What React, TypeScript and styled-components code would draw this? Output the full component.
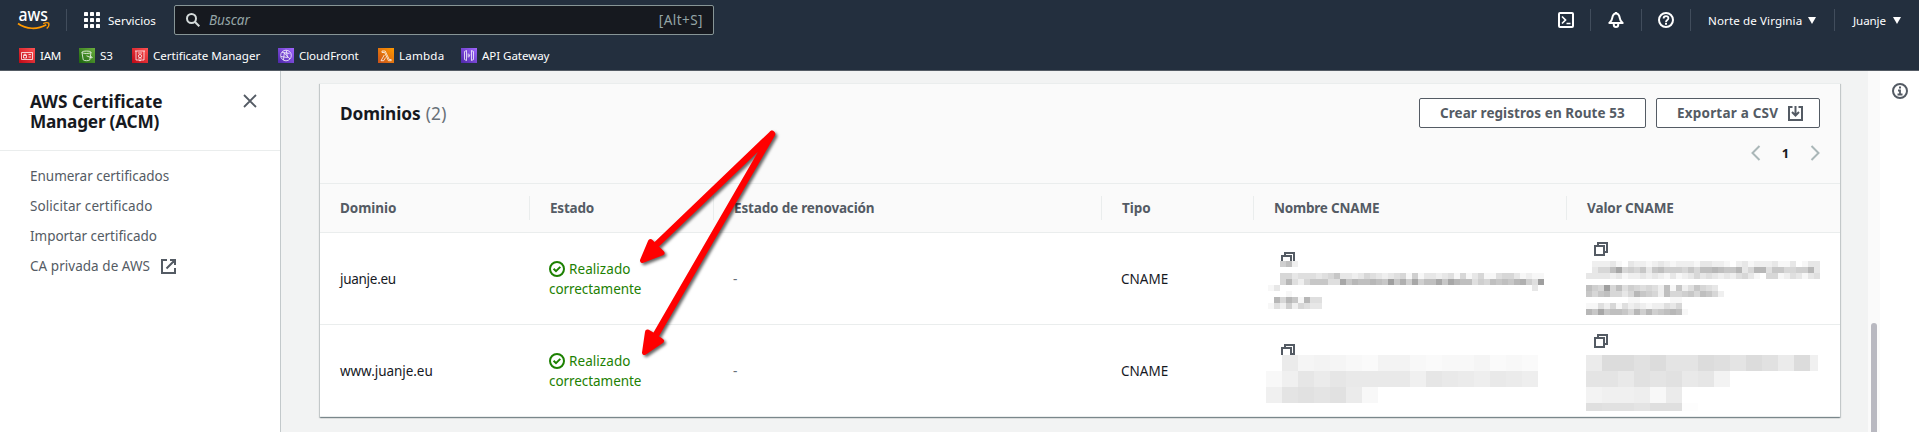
import React from "react";
import styled, { createGlobalStyle } from "styled-components";

const Global = createGlobalStyle`
  * { box-sizing: border-box; }
  body { margin: 0; background: #fff; overflow: hidden; }
  svg { display: block; flex: none; }
`;

const Page = styled.div`
  position: relative;
  display: flex;
  flex-direction: column;
  width: 1919px;
  height: 432px;
  overflow: hidden;
  font-family: "Noto Sans", "Open Sans", sans-serif;
  font-size: 13.5px;
  line-height: 20px;
  color: #16191f;
`;

const Text = styled.span<{ $ls?: number }>`
  white-space: nowrap;
  letter-spacing: ${(p) => p.$ls ?? 0}px;
`;

/* ---------- top navigation ---------- */

const TopNav = styled.header`
  flex: none;
  height: 71px;
  background: #232f3e;
  border-bottom: 1px solid #545b64;
  color: #fff;
  font-size: 11.6px;
  line-height: 17px;
`;

const NavRow = styled.div`
  display: flex;
  align-items: center;
  height: 40px;
`;

const Logo = styled.div`
  display: flex;
  align-items: center;
  width: 67px;
  height: 22px;
  padding-left: 17px;
  border-right: 1px solid #414d5c;
`;

const Services = styled.div`
  display: flex;
  align-items: center;
  gap: 8px;
  width: 107px;
  padding-left: 17px;

  span { padding-top: 1px; }
`;

const Search = styled.div`
  display: flex;
  align-items: center;
  width: 540px;
  height: 30px;
  padding: 0 10px 0 11px;
  background: #16191f;
  border: 1px solid #879596;
  border-radius: 2px;
  color: #95a5a6;
  font-size: 13.5px;
  line-height: 20px;
`;

const Placeholder = styled(Text)`
  flex: 1;
  padding-left: 9px;
  font-style: italic;
`;

const NavTools = styled.div`
  display: flex;
  align-items: center;
  margin-left: auto;
`;

const Tool = styled.div<{ $w: number; $pad: number; $last?: boolean }>`
  display: flex;
  align-items: center;
  width: ${(p) => p.$w}px;
  height: 22px;
  padding-left: ${(p) => p.$pad}px;
  border-right: ${(p) => (p.$last ? "0" : "1px solid #414d5c")};

  span { padding-top: 1px; }
`;

const Caret = styled.i<{ $gap: number }>`
  width: 0;
  height: 0;
  margin-left: ${(p) => p.$gap}px;
  border: 4px solid transparent;
  border-top: 7px solid #fff;
  border-bottom: 0;
`;

const Favorites = styled.nav`
  display: flex;
  align-items: center;
  height: 29px;
  margin-top: 1px;
  padding-left: 19px;
`;

const Favorite = styled.div<{ $w: number }>`
  display: flex;
  align-items: center;
  gap: 5px;
  width: ${(p) => p.$w}px;
`;

/* ---------- page frame ---------- */

const Body = styled.div`
  display: flex;
  flex: 1;
  min-height: 0;
`;

const Sidebar = styled.aside`
  width: 281px;
  border-right: 1px solid #c3c9cb;
  background: #fff;
`;

const SideHead = styled.div`
  display: flex;
  justify-content: space-between;
  height: 80px;
  padding: 21px 23px 0 30px;
  border-bottom: 1px solid #eaeded;

  svg { margin-top: 2px; }
`;

const SideTitle = styled.h2`
  display: flex;
  flex-direction: column;
  margin: 0;
  font-size: 17.25px;
  line-height: 20px;
  font-weight: 700;
`;

const SideLinks = styled.ul`
  display: flex;
  flex-direction: column;
  gap: 10px;
  margin: 0;
  padding: 15px 0 0 30px;
  list-style: none;
  color: #545b64;
`;

const SideLink = styled.li`
  display: flex;
  align-items: center;
  gap: 11px;
`;

const Content = styled.main`
  flex: 1;
  padding: 12px 28px 0 39px;
  background: #f2f3f3;
`;

const ScrollTrack = styled.div`
  width: 12px;
  padding: 252px 3px 0;
  background: #fafafa;
`;

const ScrollThumb = styled.div`
  height: 120px;
  border-radius: 3px;
  background: #b8b8c0;
`;

const HelpPanel = styled.div`
  width: 39px;
  padding: 12px 0 0 12px;
  background: #fff;
`;

/* ---------- domains card ---------- */

const Card = styled.section`
  background: #fff;
  border-top: 1px solid #eaeded;
  box-shadow: 0 1px 1px 0 rgba(0, 28, 36, 0.3), 1px 1px 1px 0 rgba(0, 28, 36, 0.15),
    -1px 1px 1px 0 rgba(0, 28, 36, 0.15);
`;

const CardHead = styled.div`
  height: 100px;
  padding: 14px 20px 0 20px;
  background: #fafafa;
  border-bottom: 1px solid #eaeded;
`;

const HeadLine = styled.div`
  display: flex;
  align-items: center;
  gap: 10px;
  height: 30px;
`;

const CardTitle = styled.h2`
  display: flex;
  flex: 1;
  gap: 5px;
  margin: 0;
  padding-top: 2px;
  font-size: 17.25px;
  line-height: 24px;
`;

const Count = styled(Text)`
  font-weight: 400;
  color: #687078;
`;

const Button = styled.button<{ $w: number }>`
  display: flex;
  align-items: center;
  gap: 10px;
  width: ${(p) => p.$w}px;
  height: 30px;
  padding: 0 0 0 20px;
  background: #fff;
  border: 1px solid #545b64;
  border-radius: 2px;
  color: #545b64;
  font: 700 13.5px/20px "Noto Sans", "Open Sans", sans-serif;
`;

const Pager = styled.div`
  display: flex;
  align-items: center;
  justify-content: space-between;
  width: 69px;
  height: 18px;
  margin: 16px 0 0 auto;
  font-size: 13px;
  font-weight: 700;
`;

const Row = styled.div<{ $head?: boolean }>`
  display: grid;
  grid-template-columns: 210px 184px 388px 152px 313px 1fr;
  height: ${(p) => (p.$head ? 49 : 92)}px;
  background: ${(p) => (p.$head ? "#fafafa" : "#fff")};
  border-bottom: 1px solid #eaeded;
`;

const HeadCell = styled.div`
  display: flex;
  align-items: center;
  height: 24px;
  margin-top: 12px;
  padding-left: 20px;
  border-right: 1px solid #eaeded;
  color: #545b64;
  font-weight: 700;

  &:last-child { border-right: 0; }
`;

const Cell = styled.div<{ $muted?: boolean }>`
  display: flex;
  align-items: center;
  padding: 1px 0 0 19px;
  color: ${(p) => (p.$muted ? "#687078" : "#16191f")};
`;

const DomainCell = styled(Cell)`
  padding-left: 20px;
`;

const Status = styled.div`
  display: flex;
  flex-direction: column;
  color: #1d8102;
`;

const StatusLine = styled.div`
  display: flex;
  align-items: center;
  gap: 4px;
`;

const CopyCell = styled.div<{ $top: number; $icon: number; $gap: number; $left: number }>`
  display: flex;
  flex-direction: column;
  align-items: flex-start;
  padding: ${(p) => p.$top}px 0 0 ${(p) => p.$left}px;

  svg:first-child { margin-left: ${(p) => p.$icon}px; }
  svg + svg { margin-top: ${(p) => p.$gap}px; background: #fff; }
`;

const Arrows = styled.svg`
  position: absolute;
  left: 0;
  top: 0;
  pointer-events: none;
  filter: drop-shadow(2px 2px 1.5px rgba(0, 0, 0, 0.6));
`;

/* ---------- icons ---------- */

const AwsLogo = () => (
  <svg width="34" height="40" viewBox="0 -9.5 34 40">
    <text x="1.5" y="11.5" fill="#fff" fontFamily="Noto Sans, sans-serif" fontSize="18" fontWeight="500" textLength="29.500" lengthAdjust="spacingAndGlyphs">aws</text>
    <path d="M1 14c8.300 6 19.500 6.300 28.300 1.200" fill="none" stroke="#f90" strokeWidth="1.700" />
    <path d="M26.200 14.100c2-1 4.600-1.100 5.500-.5.500 1.300-.3 4-2 5.500" fill="none" stroke="#f90" strokeWidth="1.300" />
  </svg>
);

const GridIcon = () => (
  <svg width="16" height="16" fill="#fff">
    {[0, 6, 12].map((y) => [0, 6, 12].map((x) => <rect key={`${x}-${y}`} x={x} y={y} width="4" height="4" rx=".4" />))}
  </svg>
);

const SearchIcon = () => (
  <svg width="14" height="14" fill="none" stroke="#d5dbdb" strokeWidth="2">
    <circle cx="5.500" cy="5.500" r="4.500" />
    <path d="M8.800 8.800 13.300 13.300" />
  </svg>
);

const TerminalIcon = () => (
  <svg width="16" height="16" fill="none" stroke="#fff" strokeWidth="2">
    <rect x="1" y="1" width="14" height="14" rx="1" />
    <path d="M4 4.500 7.500 8 4 11.500M8.500 11.500H12.500" strokeWidth="1.700" />
  </svg>
);

const BellIcon = () => (
  <svg width="16" height="16" fill="none" stroke="#fff" strokeWidth="2" strokeLinejoin="round">
    <path d="M8 1.500C5.300 1.500 4.500 4 4.200 6.200 4 8.200 3.300 9.500 1.300 11H14.700C12.700 9.500 12 8.200 11.800 6.200 11.500 4 10.700 1.500 8 1.500Z" />
    <path d="M8 0v2M5.800 12v1c0 1.100 1 2 2.200 2s2.200-.9 2.200-2v-1" />
  </svg>
);

const HelpIcon = () => (
  <svg width="16" height="16" fill="none" stroke="#fff" strokeWidth="2">
    <circle cx="8" cy="8" r="7" />
    <path d="M5.600 6.600C5.600 5 6.600 4.200 8 4.200S10.400 5 10.400 6.300C10.400 7.900 8 8 8 10" strokeWidth="1.800" />
    <path d="M8 10.800v2" />
  </svg>
);

const CloseIcon = () => (
  <svg width="14" height="14" stroke="#545b64" strokeWidth="1.800">
    <path d="M1 1 13 13M13 1 1 13" />
  </svg>
);

const ExternalIcon = () => (
  <svg width="15" height="15" fill="none" stroke="#545b64" strokeWidth="2">
    <path d="M6 1H1V14H14V9M9 1H14V6M14 1 5.500 9.500" />
  </svg>
);

const InfoIcon = () => (
  <svg width="16" height="16" fill="none" stroke="#545b64" strokeWidth="2">
    <circle cx="8" cy="8" r="7" />
    <path d="M7 4.500H9M6 7.500H8V11M5.500 11.500H10.500" strokeWidth="1.800" />
  </svg>
);

const DownloadIcon = () => (
  <svg width="15" height="15" fill="none" stroke="#545b64" strokeWidth="2">
    <path d="M4.500 1H1V14H14V1H10.500M7.500 0V9.500M4 6 7.500 9.500 11 6" />
  </svg>
);

const ChevronIcon = ({ flip }: { flip?: boolean }) => (
  <svg width="10" height="16" fill="none" stroke="#aab7b8" strokeWidth="2">
    <path d={flip ? "M1.500 1 8.500 8 1.500 15" : "M8.500 1 1.500 8 8.500 15"} />
  </svg>
);

const CheckIcon = () => (
  <svg width="16" height="16" fill="none" stroke="#1d8102" strokeWidth="2">
    <circle cx="8" cy="8" r="7" />
    <path d="M4.600 7.800 7 10.200 11.300 5.900" />
  </svg>
);

const CopyIcon = () => (
  <svg width="14" height="14" fill="none" stroke="#545b64" strokeWidth="2">
    <path d="M4 4V1H13V10H10" />
    <rect x="1" y="4" width="9" height="9" />
  </svg>
);

const serviceArt: Record<string, { from: string; to: string; art: React.ReactNode }> = {
  iam: {
    from: "#bd0816", to: "#ff5252",
    art: <path d="M2.500 4.500H13.500V11.500H2.500ZM4.500 7.500H7.500V10H4.500ZM5 7.500V6.300H7V7.500M9.500 6.500H12M9.500 9H12" />,
  },
  s3: {
    from: "#1b660f", to: "#6cae3e",
    art: <path d="M3 4.300C3 2.700 12 2.700 12 4.300S3 5.900 3 4.300L4.200 11.800C5 13 10.200 13 10.900 11.800L12 4.300M7.500 7.800 13 10C13.600 9.300 12.500 8.500 11.500 8" />,
  },
  acm: {
    from: "#bd0816", to: "#ff5252",
    art: <path d="M3 3H13M4 3V12H6.300M12 3V12H9.800M6 5H10M8 6.500A1.600 1.600 0 1 1 8 9.700 1.600 1.600 0 0 1 8 6.500M7 9.700V13L8 12.200 9 13V9.700" />,
  },
  cloudfront: {
    from: "#4d27a8", to: "#a166ff",
    art: <path d="M8 2.200A5.300 5.300 0 1 1 8 12.800 5.300 5.300 0 0 1 8 2.200M4 4.200 11.500 5.500M5.500 12 6.300 5 12 11M3 8.500 9.500 9.500 8.300 2.500" />,
  },
  lambda: {
    from: "#c8511b", to: "#ff9900",
    art: <path d="M4 3H7.200L11.200 11.500H13.200V12.700H10.400L6.700 4.500H4ZM6.300 7 3 12.700H5.700L7.600 9.500" />,
  },
  gateway: {
    from: "#4d27a8", to: "#a166ff",
    art: <path d="M5.500 2.500 3.500 3.500V11.500L5.500 12.500ZM10.500 2.500 12.500 3.500V11.500L10.500 12.500ZM7.200 5.500V9.500M8.800 6.300 8.300 8.700" />,
  },
};

const ServiceIcon = ({ id }: { id: string }) => {
  const s = serviceArt[id];
  return (
    <svg width="16" height="15" viewBox="0 0 16 15">
      <linearGradient id={`grad-${id}`} x1="0" y1="1" x2="1" y2="0">
        <stop offset="0" stopColor={s.from} />
        <stop offset="1" stopColor={s.to} />
      </linearGradient>
      <rect width="16" height="15" fill={`url(#grad-${id})`} />
      <g fill="none" stroke="#fff" strokeWidth=".9" strokeOpacity=".85">{s.art}</g>
    </svg>
  );
};

/* ---------- redacted values ---------- */

type MosaicProps = { rows: string[]; cell: number; step: number; width?: number; height?: number };

/* Each character is one cell: a hexadecimal darkness, 0 being white. */
const Mosaic = ({ rows, cell, step, width, height }: MosaicProps) => {
  const cols = Math.max(...rows.map((r) => r.length));
  return (
    <svg width={width ?? cols * cell} height={height ?? rows.length * cell} shapeRendering="crispEdges">
      {rows.map((row, y) =>
        row.split("").map((ch, x) => {
          const g = Math.round(255 - parseInt(ch, 16) * step);
          return ch === "0" ? null : (
            <rect key={`${x}-${y}`} x={x * cell} y={y * cell} width={cell} height={cell} fill={`rgb(${g},${g},${g})`} />
          );
        })
      )}
    </svg>
  );
};

const name1 = [
  "00682",
  "",
  "0055344434573323543234516133234151351145531211",
  "005942577744b798898" + "7c7a6b688b7b98846587879a64c",
  "13000000000000000000000000000000000000000000" + "3",
  "0001",
  "095971944",
  "142625433",
];
const value1 = [
  "022231032212321222133221023122231130133",
  "03558b565737866657588987793599477556693",
  "333323122323213123534323245310551243134",
  "",
  "865c584654542817247543",
  "75785535976528556758752",
  "00000001100000110",
  "1142514232122435",
  "97b78875969678981",
];
const name2 = ["08454325532334232", "36a8a99996a987987", "6bcbc83"];
const value2 = ["8eecebbedbec8e6", "bb9cbc9a5", "566738", "dccbdd1"];

const rowsData = [
  {
    domain: "juanje.eu", ls: -0.28,
    name: { top: 19, icon: 13, gap: -5, left: 14, mosaic: <Mosaic rows={name1} cell={6} step={8} /> },
    value: { top: 9, icon: 8, gap: 5, left: 19, mosaic: <Mosaic rows={value1} cell={6} step={8} /> },
  },
  {
    domain: "www.juanje.eu", ls: -0.05,
    name: { top: 19, icon: 15, gap: -3, left: 12, mosaic: <Mosaic rows={name2} cell={16} step={2.5} /> },
    value: { top: 9, icon: 8, gap: 7, left: 19, mosaic: <Mosaic rows={value2} cell={16} step={2.5} width={232} height={56} /> },
  },
];

const favorites: [string, string, number, number][] = [
  ["iam", "IAM", 60, -0.3],
  ["s3", "S3", 53, -0.2],
  ["acm", "Certificate Manager", 146, -0.03],
  ["cloudfront", "CloudFront", 100, -0.1],
  ["lambda", "Lambda", 83, 0.2],
  ["gateway", "API Gateway", 90, -0.08],
];

const columns: [string, number][] = [
  ["Dominio", -0.04],
  ["Estado", -0.2],
  ["Estado de renovación", -0.16],
  ["Tipo", 0],
  ["Nombre CNAME", -0.2],
  ["Valor CNAME", -0.1],
];

export default function App() {
  return (
    <Page>
      <Global />
      <TopNav>
        <NavRow>
          <Logo><AwsLogo /></Logo>
          <Services><GridIcon /><Text>Servicios</Text></Services>
          <Search>
            <SearchIcon />
            <Placeholder>Buscar</Placeholder>
            <Text $ls={0.45}>[Alt+S]</Text>
          </Search>
          <NavTools>
            <Tool $w={49} $pad={16}><TerminalIcon /></Tool>
            <Tool $w={51} $pad={17}><BellIcon /></Tool>
            <Tool $w={49} $pad={16}><HelpIcon /></Tool>
            <Tool $w={144} $pad={17}><Text $ls={0.11}>Norte de Virginia</Text><Caret $gap={6} /></Tool>
            <Tool $w={84} $pad={18} $last><Text $ls={-0.1}>Juanje</Text><Caret $gap={7} /></Tool>
          </NavTools>
        </NavRow>
        <Favorites>
          {favorites.map(([id, label, w, ls]) => (
            <Favorite key={id} $w={w}><ServiceIcon id={id} /><Text $ls={ls}>{label}</Text></Favorite>
          ))}
        </Favorites>
      </TopNav>

      <Body>
        <Sidebar>
          <SideHead>
            <SideTitle><Text>AWS Certificate</Text><Text $ls={-0.24}>Manager (ACM)</Text></SideTitle>
            <CloseIcon />
          </SideHead>
          <SideLinks>
            <SideLink><Text $ls={-0.02}>Enumerar certificados</Text></SideLink>
            <SideLink><Text $ls={0.08}>Solicitar certificado</Text></SideLink>
            <SideLink><Text $ls={-0.03}>Importar certificado</Text></SideLink>
            <SideLink><Text $ls={0.04}>CA privada de AWS</Text><ExternalIcon /></SideLink>
          </SideLinks>
        </Sidebar>

        <Content>
          <Card>
            <CardHead>
              <HeadLine>
                <CardTitle><Text $ls={-0.07}>Dominios</Text><Count $ls={0.3}>(2)</Count></CardTitle>
                <Button $w={227}><Text $ls={0.07}>Crear registros en Route 53</Text></Button>
                <Button $w={164}><Text $ls={0.2}>Exportar a CSV</Text><DownloadIcon /></Button>
              </HeadLine>
              <Pager><ChevronIcon /><span>1</span><ChevronIcon flip /></Pager>
            </CardHead>
            <Row $head>
              {columns.map(([label, ls]) => (
                <HeadCell key={label}><Text $ls={ls}>{label}</Text></HeadCell>
              ))}
            </Row>
            {rowsData.map((r) => (
              <Row key={r.domain}>
                <DomainCell><Text $ls={r.ls}>{r.domain}</Text></DomainCell>
                <Cell>
                  <Status>
                    <StatusLine><CheckIcon /><Text $ls={0.06}>Realizado</Text></StatusLine>
                    <Text $ls={-0.06}>correctamente</Text>
                  </Status>
                </Cell>
                <Cell $muted>-</Cell>
                <Cell><Text>CNAME</Text></Cell>
                <CopyCell $top={r.name.top} $icon={r.name.icon} $gap={r.name.gap} $left={r.name.left}>
                  <CopyIcon />{r.name.mosaic}
                </CopyCell>
                <CopyCell $top={r.value.top} $icon={r.value.icon} $gap={r.value.gap} $left={r.value.left}>
                  <CopyIcon />{r.value.mosaic}
                </CopyCell>
              </Row>
            ))}
          </Card>
        </Content>
        <ScrollTrack><ScrollThumb /></ScrollTrack>
        <HelpPanel><InfoIcon /></HelpPanel>
      </Body>

      <Arrows width="1919" height="432" fill="#f00" stroke="#f00" strokeLinecap="round" strokeLinejoin="round">
        <path d="M772 134 654 247M772 134 653 340" strokeWidth="6.500" fill="none" />
        <path d="M642.500 260.500 650.500 241.500 656 247 662 253ZM644.500 352.500 647.500 332 655 336.500 661.500 341Z" strokeWidth="5" />
      </Arrows>
    </Page>
  );
}
